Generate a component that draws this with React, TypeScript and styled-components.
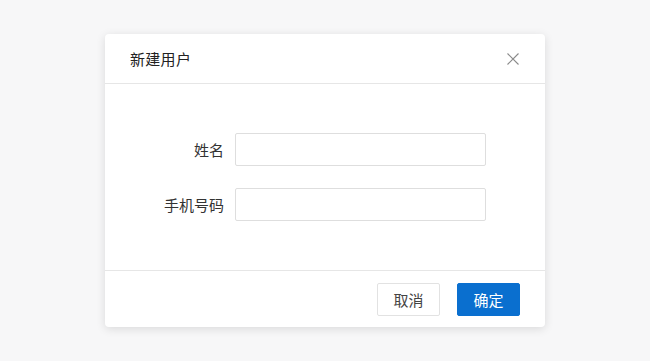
import React from 'react';
import styled, { createGlobalStyle } from 'styled-components';

const GlobalStyle = createGlobalStyle`
  html, body {
    margin: 0;
    padding: 0;
    background: #f7f7f8;
    font-family: "Noto Sans CJK SC", "Noto Sans", sans-serif;
  }
`;

const Page = styled.div`
  width: 650px;
  height: 361px;
  padding-top: 34px;
  box-sizing: border-box;
  display: flex;
  justify-content: center;
  align-items: flex-start;
`;

const Modal = styled.div`
  width: 440px;
  background: #fff;
  border-radius: 4px;
  box-shadow: 0 2px 10px rgba(0, 0, 0, 0.12);
`;

const Header = styled.div`
  height: 49px;
  display: flex;
  align-items: center;
  justify-content: space-between;
  padding: 0 25px;
  border-bottom: 1px solid #e6e6e6;
`;

const Title = styled.div`
  font-size: 15px;
  color: #222;
  letter-spacing: 0.3px;
`;

const Close = styled.button`
  width: 16px;
  height: 16px;
  padding: 0;
  border: none;
  background: none;
  display: flex;
  align-items: center;
  justify-content: center;
  margin-right: -1px;
`;

const Body = styled.div`
  padding: 49px 0;
  display: grid;
  grid-template-columns: auto 251px;
  column-gap: 11px;
  row-gap: 22px;
  justify-content: center;
  align-items: center;
`;

const Label = styled.label`
  font-size: 15px;
  color: #333;
  text-align: right;
`;

const Input = styled.input`
  height: 33px;
  box-sizing: border-box;
  border: 1px solid #dedede;
  border-radius: 2px;
  outline: none;
  padding: 0 10px;
  font-size: 14px;
`;

const Footer = styled.div`
  height: 57px;
  box-sizing: border-box;
  border-top: 1px solid #e6e6e6;
  display: flex;
  justify-content: flex-end;
  align-items: center;
  gap: 17px;
  padding: 1px 25px 0;
`;

const Button = styled.button<{ $primary?: boolean }>`
  width: 63px;
  height: 33px;
  border-radius: 2px;
  font-family: "Noto Sans CJK SC", sans-serif;
  font-size: 15px;
  border: 1px solid ${p => (p.$primary ? '#0a6fcf' : '#e2e2e2')};
  background: ${p => (p.$primary ? '#0a6fcf' : '#fff')};
  color: ${p => (p.$primary ? '#fff' : '#444')};
`;

export default function App() {
  return (
    <>
      <GlobalStyle />
      <Page>
        <Modal>
          <Header>
            <Title>新建用户</Title>
            <Close aria-label="close">
              <svg width="12" height="12" viewBox="0 0 12 12">
                <path d="M0.5 0.5L11.5 11.5M11.5 0.5L0.5 11.5" stroke="#8a8a8a" strokeWidth="1.1" />
              </svg>
            </Close>
          </Header>
          <Body>
            <Label>姓名</Label>
            <Input />
            <Label>手机号码</Label>
            <Input />
          </Body>
          <Footer>
            <Button>取消</Button>
            <Button $primary>确定</Button>
          </Footer>
        </Modal>
      </Page>
    </>
  );
}
